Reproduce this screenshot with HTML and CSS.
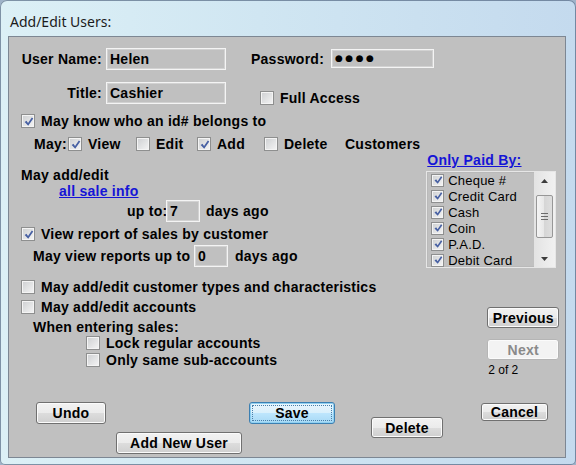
FILE: index.html
```html
<!DOCTYPE html>
<html lang="en">
<head>
    <meta charset="UTF-8">
    <title>Add/Edit Users</title>
    <link rel="stylesheet" href="styles.css">
</head>
<body>
    <div class="window">
        <div class="titlebar">Add/Edit Users:</div>

        <div class="client">
            <div class="row user-row">
                <span class="lbl">User Name:</span>
                <div class="field name-field">Helen</div>
                <span class="pw-lbl">Password:</span>
                <div class="field pw-field">●●●●</div>
            </div>

            <div class="row title-row">
                <span class="lbl">Title:</span>
                <div class="field name-field">Cashier</div>
                <div class="chk full"><span class="cb"></span>Full Access</div>
            </div>

            <div class="row know-row">
                <div class="chk"><span class="cb"><svg><use href="#tick"/></svg></span>May know who an id# belongs to</div>
            </div>

            <div class="row may-row">
                <span class="may-lbl">May:</span>
                <div class="chk w-view"><span class="cb"><svg><use href="#tick"/></svg></span>View</div>
                <div class="chk w-edit"><span class="cb"></span>Edit</div>
                <div class="chk w-add"><span class="cb"><svg><use href="#tick"/></svg></span>Add</div>
                <div class="chk w-delete"><span class="cb"></span>Delete</div>
                <span>Customers</span>
            </div>

            <div class="middle">
                <div class="left">
                    <div class="may-edit">May add/edit</div>
                    <div class="sale-link"><span class="link">all sale info</span></div>

                    <div class="row upto-row">
                        <span class="upto-lbl">up to:</span>
                        <div class="field days-field">7</div>
                        <span class="days">days ago</span>
                    </div>

                    <div class="chk view-row"><span class="cb"><svg><use href="#tick"/></svg></span>View report of sales by customer</div>

                    <div class="row reports-row">
                        <span class="reports-lbl">May view reports up to</span>
                        <div class="field days-field">0</div>
                        <span class="days days-2">days ago</span>
                    </div>

                    <div class="chk types-row"><span class="cb"></span>May add/edit customer types and characteristics</div>
                    <div class="chk accounts-row"><span class="cb"></span>May add/edit accounts</div>
                    <div class="entering">When entering sales:</div>
                    <div class="chk lock-row"><span class="cb"></span>Lock regular accounts</div>
                    <div class="chk same-row"><span class="cb"></span>Only same sub-accounts</div>
                </div>

                <div class="right">
                    <div class="paid-link"><span class="link">Only Paid By:</span></div>
                    <div class="list">
                        <div class="items">
                            <div class="opt"><span class="cb sm"><svg><use href="#tick"/></svg></span>Cheque #</div>
                            <div class="opt"><span class="cb sm"><svg><use href="#tick"/></svg></span>Credit Card</div>
                            <div class="opt"><span class="cb sm"><svg><use href="#tick"/></svg></span>Cash</div>
                            <div class="opt"><span class="cb sm"><svg><use href="#tick"/></svg></span>Coin</div>
                            <div class="opt"><span class="cb sm"><svg><use href="#tick"/></svg></span>P.A.D.</div>
                            <div class="opt"><span class="cb sm"><svg><use href="#tick"/></svg></span>Debit Card</div>
                        </div>
                        <div class="scrollbar">
                            <div class="arrow"><svg width="7" height="4"><path d="M0 4 L3.5 0 L7 4 Z"/></svg></div>
                            <div class="thumb"><span></span><span></span><span></span></div>
                            <div class="arrow arrow-down"><svg width="7" height="4"><path d="M0 0 L3.5 4 L7 0 Z"/></svg></div>
                        </div>
                    </div>
                    <button class="btn prev">Previous</button>
                    <button class="btn next" disabled>Next</button>
                    <div class="count">2 of 2</div>
                </div>
            </div>

            <div class="row buttons">
                <button class="btn undo">Undo</button>
                <button class="btn add-user">Add New User</button>
                <button class="btn save">Save</button>
                <button class="btn delete">Delete</button>
                <button class="btn cancel">Cancel</button>
            </div>
        </div>
    </div>

    <!-- check mark used by every ticked box -->
    <svg class="defs">
        <symbol id="tick" viewBox="0 0 12 12">
            <path d="M1.8 6.6 L3.8 5.1 L5.5 7.5 L9.6 1.6 L11.2 2.8 L5.7 10.5 Z" fill="#4760a3"/>
        </symbol>
    </svg>
</body>
</html>
```

FILE: styles.css
```css
* {
    box-sizing: border-box;
}

body {
    margin: 0;
    background: #9fb3c9;
    font-family: "Liberation Sans", Arial, sans-serif;
    font-size: 14px;
    font-weight: bold;
    letter-spacing: 0.25px;
    color: #000;
}

.window {
    width: 576px;
    height: 465px;
    border-radius: 7px 7px 5px 5px;
    background: linear-gradient(90deg, #dcf0f6 0%, #d0e6f2 45%, #c4daee 100%);
    box-shadow: inset 0 0 0 1px rgba(50, 70, 100, 0.55);
    overflow: hidden;
}

.titlebar {
    height: 36px;
    padding: 12px 0 0 10px;
    font-family: "Noto Sans", sans-serif;
    font-size: 14px;
    font-weight: normal;
    letter-spacing: 0;
    line-height: 19px;
    color: #1b1b1b;
}

.client {
    margin-left: 8px;
    width: 558px;
    height: 422px;
    border: 1px solid #7d8793;
    background: #c0c0c0;
}

.row {
    display: flex;
    align-items: flex-start;
    white-space: nowrap;
}

.row > span {
    flex: none;
}

/* text boxes */
.field {
    flex: none;
    height: 22px;
    background: #c0c0c0;
    border: 1px solid #f4f4f4;
    box-shadow: inset 0 0 0 1px #d2d2d2;
    line-height: 21px;
    padding-left: 3px;
}

.lbl {
    width: 86px;
    padding-right: 4px;
    text-align: right;
    line-height: 23px;
}

.user-row {
    margin-top: 11px;
    padding-left: 11px;
    height: 22px;
}

.name-field {
    width: 120px;
}

.pw-lbl {
    width: 80px;
    margin-left: 25px;
    line-height: 23px;
}

.pw-field {
    width: 103px;
    height: 19px;
    margin-top: 1px;
    padding-left: 3px;
    line-height: 17px;
    font-family: "DejaVu Sans", sans-serif;
    font-size: 9px;
    letter-spacing: 2.5px;
}

.title-row {
    margin-top: 12px;
    padding-left: 11px;
    height: 23px;
}

.full {
    margin-left: 34px;
    margin-top: 9px;
}

/* check boxes */
.chk {
    display: flex;
    align-items: center;
    gap: 6px;
    height: 14px;
    line-height: 15px;
    white-space: nowrap;
}

.cb {
    flex: none;
    width: 14px;
    height: 14px;
    display: flex;
    align-items: center;
    justify-content: center;
    border: 1px solid #8e8f8f;
    background: linear-gradient(135deg, #cdcfd1, #f5f5f5);
    box-shadow: inset 0 0 0 1px #f4f4f4;
}

.cb svg {
    width: 11px;
    height: 11px;
}

.cb.sm {
    width: 13px;
    height: 13px;
}

.cb.sm svg {
    width: 10px;
    height: 10px;
}

.know-row {
    margin-top: 9px;
    padding-left: 12px;
    height: 14px;
}

.may-row {
    margin-top: 9px;
    padding-left: 25px;
    height: 14px;
    line-height: 15px;
}

.may-lbl {
    width: 34px;
}

.w-view { width: 68px; }
.w-edit { width: 61px; }
.w-add { width: 67px; }
.w-delete { width: 81px; }

.middle {
    display: flex;
    height: 226px;
}

.left {
    width: 418px;
}

.right {
    width: 139px;
}

.link {
    color: #1515d6;
    text-decoration: underline;
}

.may-edit {
    margin: 17px 0 0 12px;
    height: 14px;
    line-height: 15px;
}

.sale-link {
    margin: 2px 0 0 50px;
    height: 14px;
    line-height: 15px;
}

.upto-row {
    margin-top: 2px;
    padding-left: 118px;
    height: 22px;
}

.upto-lbl {
    width: 39px;
    line-height: 23px;
}

.days-field {
    width: 34px;
}

.days {
    margin-left: 6px;
    line-height: 23px;
}

.days-2 {
    margin-left: 7px;
}

.view-row {
    margin: 5px 0 0 12px;
}

.reports-row {
    margin-top: 4px;
    padding-left: 24px;
    height: 22px;
}

.reports-lbl {
    width: 161px;
    line-height: 23px;
}

.types-row {
    margin: 13px 0 0 12px;
}

.accounts-row {
    margin: 6px 0 0 12px;
}

.entering {
    margin: 6px 0 0 24px;
    height: 14px;
    line-height: 15px;
}

.lock-row {
    margin: 2px 0 0 77px;
}

.same-row {
    margin: 3px 0 0 77px;
}

/* paid-by list */
.paid-link {
    margin: 2px 0 0 1px;
    line-height: 14px;
}

.list {
    display: flex;
    margin-top: 4px;
    width: 130px;
    height: 97px;
    border: 1px solid #e6e6e6;
    box-shadow: inset 0 0 0 1px #b9b9b9;
    overflow: hidden;
}

.items {
    flex: 1;
}

.opt {
    display: flex;
    align-items: center;
    gap: 4px;
    height: 16px;
    padding-left: 4px;
    font-size: 13px;
    font-weight: normal;
    letter-spacing: 0.2px;
    white-space: nowrap;
}

.scrollbar {
    display: flex;
    flex-direction: column;
    width: 21px;
    background: linear-gradient(90deg, #e3e3e3, #f1f1f1);
}

.arrow {
    height: 17px;
    display: flex;
    align-items: center;
    justify-content: center;
}

.arrow svg {
    fill: #3c3c3c;
}

.arrow-down {
    margin-top: auto;
    height: 16px;
}

.thumb {
    margin: 6px 2px 0 2px;
    height: 43px;
    border: 1px solid #979797;
    border-radius: 2px;
    background: linear-gradient(90deg, #f4f4f4, #e6e6e6 50%, #d6d6d6 50%, #dedede);
    display: flex;
    flex-direction: column;
    align-items: center;
    justify-content: center;
    gap: 2px;
}

.thumb span {
    width: 7px;
    height: 1px;
    background: #6b6b6b;
}

/* buttons */
.btn {
    display: block;
    padding: 0;
    font-family: "Liberation Sans", Arial, sans-serif;
    font-size: 14px;
    font-weight: bold;
    letter-spacing: 0.25px;
    color: #000;
    border: 1px solid #707070;
    border-radius: 3px;
    background: linear-gradient(#f2f2f2 0%, #ebebeb 50%, #dddddd 50%, #cfcfcf 100%);
    box-shadow: inset 0 0 0 1px #fbfbfb;
}

.prev {
    margin: 39px 0 0 61px;
    width: 72px;
    height: 21px;
}

.next {
    margin: 11px 0 0 61px;
    width: 72px;
    height: 21px;
    color: #8a8a8a;
    border-color: #b5b5b5;
    background: #f3f3f3;
}

.count {
    margin: 3px 0 0 62px;
    font-size: 12px;
    font-weight: normal;
    letter-spacing: 0;
    line-height: 14px;
}

.buttons {
    margin-top: 25px;
    padding-left: 27px;
}

.undo {
    width: 70px;
    height: 22px;
}

.add-user {
    margin: 30px 0 0 10px;
    width: 126px;
    height: 22px;
}

.save {
    margin-left: 7px;
    width: 86px;
    height: 22px;
    border-color: #3c7fb1;
    background: linear-gradient(#eaf6fd 0%, #d9f0fc 50%, #bee6fd 50%, #a7d9f5 100%);
    box-shadow: inset 0 0 0 1px #8fd0f2;
    outline: 1px dotted #4a7fa8;
    outline-offset: -4px;
}

.delete {
    margin: 15px 0 0 36px;
    width: 72px;
    height: 21px;
}

.cancel {
    margin: 1px 0 0 38px;
    width: 67px;
    height: 18px;
}

.defs {
    display: block;
    width: 0;
    height: 0;
    overflow: hidden;
}
```
